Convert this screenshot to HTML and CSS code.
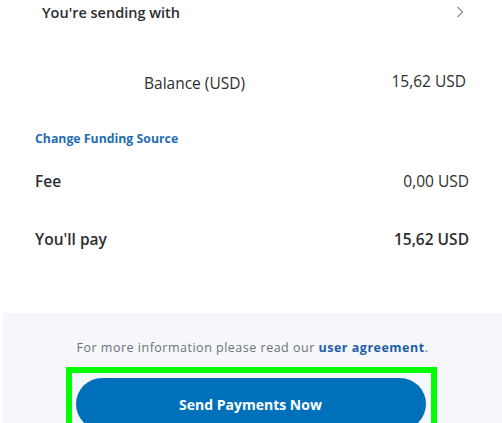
FILE: index.html
```html
<!DOCTYPE html>
<html>
<head>
<meta charset="utf-8">
<link rel="stylesheet" href="styles.css">
</head>
<body>
<div class="page">
  <div class="top">
    <div class="row head">
      <span class="head-title">You're sending with</span>
      <svg class="chev" width="8" height="12" viewBox="0 0 8 12"><path d="M1.5 1 L6.5 6 L1.5 11" fill="none" stroke="#8a8f94" stroke-width="1.2"/></svg>
    </div>
    <div class="row balance">
      <span class="bal-label">Balance (USD)</span>
      <span class="bal-val">15,62 USD</span>
    </div>
    <a class="change">Change Funding Source</a>
    <div class="row fee">
      <span>Fee</span>
      <span>0,00 USD</span>
    </div>
    <div class="row pay">
      <span>You'll pay</span>
      <span>15,62 USD</span>
    </div>
  </div>
  <div class="bottom">
    <p class="info">For more information please read our <a class="agree">user agreement</a>.</p>
    <div class="hl">
      <button class="send">Send Payments Now</button>
    </div>
  </div>
</div>
</body>
</html>
```
FILE: styles.css
```css
html, body {
  margin: 0;
  padding: 0;
  background: #ffffff;
}
body {
  font-family: "Open Sans", "Noto Sans", sans-serif;
  color: #2c2e2f;
  width: 502px;
  height: 423px;
  overflow: hidden;
}
.page {
  display: flex;
  flex-direction: column;
}
.top {
  padding: 0 33px 0 35px;
  height: 313px;
  box-sizing: border-box;
}
.row {
  display: flex;
  justify-content: space-between;
  align-items: center;
}
.head {
  height: 24px;
  padding-left: 7px;
  padding-right: 5px;
}
.head-title {
  font-weight: 600;
  font-size: 14.5px;
}
.balance {
  margin-top: 46px;
  height: 24px;
  padding-left: 109px;
  padding-right: 3px;
  font-size: 15.5px;
}
.bal-label { position: relative; top: 1px; }
.bal-val { position: relative; top: -1px; }
.change {
  display: block;
  margin-top: 35px;
  color: #1f6db5;
  font-weight: 700;
  font-size: 12.3px;
  line-height: 20px;
}
.fee {
  margin-top: 20px;
  height: 24px;
  font-size: 15.5px;
}
.fee span:first-child { font-weight: 600; }
.pay {
  margin-top: 34px;
  height: 24px;
  font-size: 15.5px;
  font-weight: 600;
}
.bottom {
  margin-left: 3px;
  background: #f5f7fa;
  height: 110px;
  display: flex;
  flex-direction: column;
  align-items: center;
}
.info {
  margin: 25px 0 0 0;
  font-size: 12.5px;
  line-height: 20px;
  color: #6c7378;
  letter-spacing: 0.5px;
}
.agree {
  color: #1f5da8;
  font-weight: 700;
}
.hl {
  margin-top: 9px;
  margin-left: -3px;
  border: 6px solid #00ff00;
  padding: 5px 5px 0 4px;
  width: 350px;
}
.send {
  display: block;
  width: 350px;
  height: 52px;
  border: none;
  border-radius: 26px;
  background: #0070ba;
  color: #ffffff;
  font-family: "Open Sans", "Noto Sans", sans-serif;
  font-weight: 700;
  font-size: 14px;
}
```
